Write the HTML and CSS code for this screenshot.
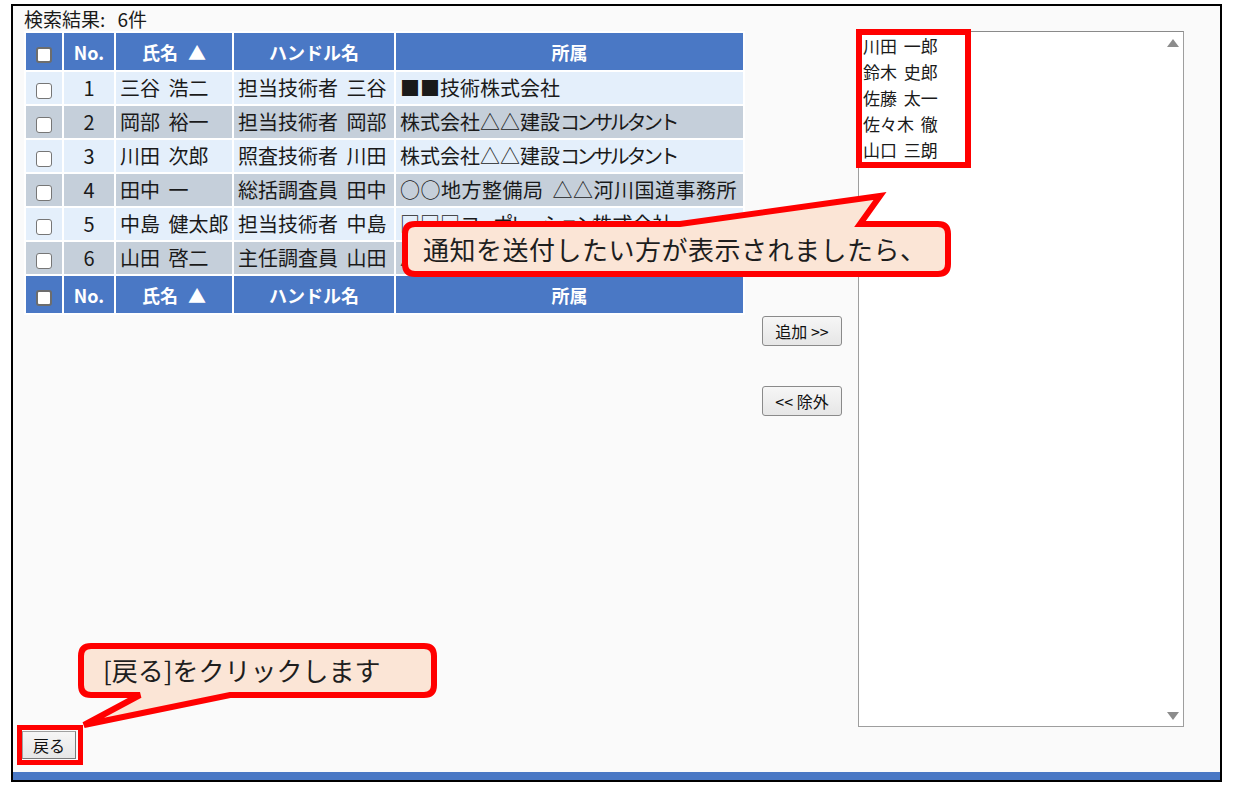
FILE: index.html
```html
<!DOCTYPE html>
<html lang="ja">
<head>
    <meta charset="UTF-8">
    <meta name="viewport" content="width=device-width, initial-scale=1.0">
    <title>通知先の選択</title>
    <link rel="stylesheet" href="styles.css">
</head>
<body>

<div class="frame">
    <div class="main">
        <div class="left">
            <div class="count">検索結果: 6件</div>
            <table class="list">
                <colgroup>
                    <col class="c-check">
                    <col class="c-no">
                    <col class="c-name">
                    <col class="c-handle">
                    <col class="c-org">
                </colgroup>
                <thead>
                    <tr>
                        <th><input type="checkbox" class="cb"></th>
                        <th>No.</th>
                        <th>氏名 ▲</th>
                        <th>ハンドル名</th>
                        <th>所属</th>
                    </tr>
                </thead>
                <tbody>
                    <tr>
                        <td class="center"><input type="checkbox" class="cb"></td>
                        <td class="center">1</td>
                        <td>三谷 浩二</td>
                        <td>担当技術者 三谷</td>
                        <td>■■技術株式会社</td>
                    </tr>
                    <tr>
                        <td class="center"><input type="checkbox" class="cb"></td>
                        <td class="center">2</td>
                        <td>岡部 裕一</td>
                        <td>担当技術者 岡部</td>
                        <td>株式会社△△建設<span class="kana">コンサルタント</span></td>
                    </tr>
                    <tr>
                        <td class="center"><input type="checkbox" class="cb"></td>
                        <td class="center">3</td>
                        <td>川田 次郎</td>
                        <td>照査技術者 川田</td>
                        <td>株式会社△△建設<span class="kana">コンサルタント</span></td>
                    </tr>
                    <tr>
                        <td class="center"><input type="checkbox" class="cb"></td>
                        <td class="center">4</td>
                        <td>田中 一</td>
                        <td>総括調査員 田中</td>
                        <td class="wide">○○地方整備局 △△河川国道事務所</td>
                    </tr>
                    <tr>
                        <td class="center"><input type="checkbox" class="cb"></td>
                        <td class="center">5</td>
                        <td>中島 健太郎</td>
                        <td>担当技術者 中島</td>
                        <td>□□□<span class="kana">コーポレーション</span>株式会社</td>
                    </tr>
                    <tr>
                        <td class="center"><input type="checkbox" class="cb"></td>
                        <td class="center">6</td>
                        <td>山田 啓二</td>
                        <td>主任調査員 山田</td>
                        <td>△△測量株式会社</td>
                    </tr>
                </tbody>
                <tfoot>
                    <tr>
                        <th><input type="checkbox" class="cb"></th>
                        <th>No.</th>
                        <th>氏名 ▲</th>
                        <th>ハンドル名</th>
                        <th>所属</th>
                    </tr>
                </tfoot>
            </table>
        </div>

        <div class="mid">
            <button class="btn move">追加 &gt;&gt;</button>
            <button class="btn move">&lt;&lt; 除外</button>
        </div>

        <div class="right">
            <div class="listbox">
                <ul class="names">
                    <li>川田 一郎</li>
                    <li>鈴木 史郎</li>
                    <li>佐藤 太一</li>
                    <li>佐々木 徹</li>
                    <li>山口 三朗</li>
                </ul>
                <div class="scroll">
                    <span class="arrow up"></span>
                    <span class="arrow down"></span>
                </div>
            </div>
        </div>
    </div>

    <div class="bottom">
        <button class="btn back">戻る</button>
    </div>
    <div class="bar"></div>
</div>

<!-- 注釈 -->
<div class="mark mark-names"></div>
<div class="mark mark-back"></div>

<div class="callout callout-1">
    <svg class="bubble" width="557" height="95" viewBox="0 0 557 95">
        <path d="M17,38 L282,38 L482,10 L462,38 L540,38 Q550,38 550,48 L550,78 Q550,88 540,88 L17,88 Q7,88 7,78 L7,48 Q7,38 17,38 Z"/>
    </svg>
    <span class="callout-text">通知を送付したい方が表示されましたら、</span>
</div>

<div class="callout callout-2">
    <svg class="bubble" width="375" height="95" viewBox="0 0 375 95">
        <path d="M21,8 L354,8 Q364,8 364,18 L364,47 Q364,57 354,57 L160,57 L14,87 L70,57 L21,57 Q11,57 11,47 L11,18 Q11,8 21,8 Z"/>
    </svg>
    <span class="callout-text">[戻る]をクリックします</span>
</div>

</body>
</html>
```

FILE: styles.css
```css
body {
    margin: 0;
    background-color: #fff;
    font-family: "Noto Sans CJK JP", "Noto Sans", sans-serif;
    color: #1a1a1a;
}
.frame {
    margin: 4px 0 0 11px;
    width: 1211px;
    height: 778px;
    box-sizing: border-box;
    border: 2px solid #000;
    background-color: #fafafa;
    display: flex;
    flex-direction: column;
}
.main {
    display: flex;
    height: 721px;
    padding-left: 11px;
}
.left {
    width: 721px;
}
.count {
    height: 24px;
    padding-top: 1px;
    line-height: 24px;
    font-size: 19px;
    word-spacing: 8px;
}
.list {
    width: 721px;
    table-layout: fixed;
    border-collapse: separate;
    border-spacing: 2px;
    background-color: #fff;
    font-size: 20px;
}
.c-check { width: 36px; }
.c-no { width: 50px; }
.c-name { width: 116px; }
.c-handle { width: 160px; }
.c-org { width: 347px; }
.list th {
    height: 37px;
    padding: 0;
    background-color: #4a78c5;
    color: #fff;
    font-size: 18px;
    font-weight: bold;
    text-align: center;
    white-space: nowrap;
    word-spacing: 6px;
}
.list td {
    height: 32px;
    padding: 0 0 0 4px;
    line-height: 32px;
    white-space: nowrap;
    overflow: hidden;
    word-spacing: 4px;
}
.list td.wide {
    letter-spacing: 0.5px;
}
.list tbody tr:nth-child(odd) td {
    background-color: #e4effb;
}
.list tbody tr:nth-child(even) td {
    background-color: #c5cfda;
}
.list td.center {
    padding: 0;
    text-align: center;
}
.kana {
    letter-spacing: -3.4px;
}
.cb {
    appearance: none;
    -webkit-appearance: none;
    box-sizing: border-box;
    width: 16px;
    height: 16px;
    margin: 0;
    border: 1px solid #767676;
    border-radius: 3px;
    background-color: #fff;
    vertical-align: middle;
}
.list th .cb {
    border: 2px solid #6d6d6d;
}
.mid {
    width: 80px;
    margin-left: 17px;
    padding-top: 310px;
    display: flex;
    flex-direction: column;
    gap: 40px;
}
.btn {
    font-family: "Noto Sans CJK JP", sans-serif;
    font-size: 16px;
    color: #111;
    background: linear-gradient(#f6f6f6, #e6e6e6);
    border: 1px solid #8a8a8a;
    border-radius: 3px;
    padding: 0;
    cursor: pointer;
}
.move {
    width: 80px;
    height: 30px;
}
.right {
    margin-left: 16px;
    padding-top: 25px;
}
.listbox {
    width: 326px;
    height: 696px;
    box-sizing: border-box;
    border: 1px solid #9e9e9e;
    border-top-color: #8a8a8a;
    background-color: #fff;
    display: flex;
}
.names {
    flex: 1;
    list-style: none;
    margin: 0;
    padding: 1px 0 0 4px;
    font-size: 17px;
    line-height: 26px;
    word-spacing: 3px;
}
.scroll {
    width: 20px;
    padding: 7px 0 6px;
    display: flex;
    flex-direction: column;
    justify-content: space-between;
    align-items: center;
}
.arrow {
    width: 0;
    height: 0;
    border-left: 6px solid transparent;
    border-right: 6px solid transparent;
}
.arrow.up {
    border-bottom: 8px solid #8c8c8c;
}
.arrow.down {
    border-top: 8px solid #8c8c8c;
}
.bottom {
    height: 41px;
    padding: 4px 0 0 9px;
}
.back {
    width: 54px;
    height: 28px;
    border-radius: 0;
    border-color: #a0a0a0 #7a7a7a #7a7a7a #a0a0a0;
}
.bar {
    height: 8px;
    background-color: #4a78c5;
}

/* 注釈 */
.mark {
    position: absolute;
    box-sizing: border-box;
    border: 6px solid #ff0000;
}
.mark-names {
    left: 856px;
    top: 29px;
    width: 115px;
    height: 139px;
}
.mark-back {
    left: 17px;
    top: 725px;
    width: 66px;
    height: 40px;
    border-width: 5px;
}
.callout {
    position: absolute;
    box-sizing: border-box;
}
.bubble {
    position: absolute;
    left: 0;
    top: 0;
}
.bubble path {
    fill: #fbe5d6;
    stroke: #ff0000;
    stroke-width: 6;
    stroke-linejoin: miter;
    stroke-miterlimit: 4;
}
.callout-text {
    position: relative;
    display: block;
    font-size: 26px;
    line-height: 30px;
    color: #1e1e1e;
    white-space: nowrap;
}
.callout-1 {
    left: 398px;
    top: 186px;
    width: 557px;
    height: 95px;
    padding: 48px 0 0 25px;
}
.callout-1 .callout-text {
    letter-spacing: 0.5px;
}
.callout-2 {
    left: 70px;
    top: 638px;
    width: 375px;
    height: 95px;
    padding: 17px 0 0 33px;
}
```
